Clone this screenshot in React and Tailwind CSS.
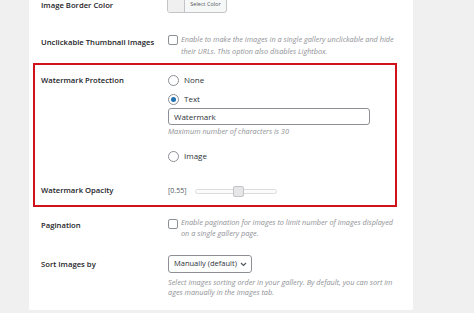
import React from 'react';

const Radio = ({ checked, label }) => (
  <label className="flex items-center h-[14px] gap-[5px] text-[8px] text-[#2c3338]">
    <span className="w-[11px] h-[11px] rounded-full border border-[#8c8f94] bg-white flex items-center justify-center">
      {checked && <span className="w-[5px] h-[5px] rounded-full bg-[#2271b1]" />}
    </span>
    {label}
  </label>
);

const Checkbox = () => (
  <span className="mt-[2px] shrink-0 w-[10px] h-[10px] rounded-[2px] border border-[#8c8f94] bg-white" />
);

const App = () => {
  return (
    <div className="min-h-screen bg-[#f0f0f1] font-['Open_Sans',sans-serif]">
      <div className="ml-[29px] w-[384px] h-[310px] bg-white overflow-hidden pl-[4px] pr-[16px]">
        {/* Image Border Color */}
        <div className="-mt-[5px] grid grid-cols-[127px_1fr] pl-[8px] h-[18px] items-center">
          <div className="text-[7.7px] leading-[10px] pt-[1px] font-semibold text-[#1d2327]">Image Border Color</div>
          <div className="-ml-[1px] flex w-[60px] h-[18px] border border-[#c3c4c7] rounded-[3px] bg-[#f6f7f7] overflow-hidden">
            <span className="w-[17px] h-full bg-[#f0f0f1] border-r border-[#c3c4c7]" />
            <span className="flex-1 flex items-center justify-center text-[5.5px] text-[#50575e]">Select Color</span>
          </div>
        </div>

        {/* Unclickable Thumbnail Images */}
        <div className="mt-[20px] grid grid-cols-[127px_1fr] pl-[8px] -mr-[8px]">
          <div className="text-[7.7px] leading-[18px] font-semibold text-[#1d2327]">Unclickable Thumbnail Images</div>
          <div className="flex gap-[3px]">
            <Checkbox />
            <p className="text-[7.3px] leading-[12px] italic text-[#8f9296]">
              Enable to make the images in a single gallery unclickable and hide their URLs. This option also disables Lightbox.
            </p>
          </div>
        </div>

        {/* Watermark section */}
        <div className="mt-[6px] border-2 border-[#d0131a] pt-[8px] pb-[7px] px-[6px]">
          <div className="grid grid-cols-[127px_1fr]">
            <div className="text-[7.7px] leading-[14px] font-semibold text-[#1d2327]">Watermark Protection</div>
            <div className="flex flex-col">
              <Radio label="None" />
              <div className="mt-[5px]">
                <Radio checked label="Text" />
              </div>
              <div className="mt-[2px] w-[202px] h-[17px] border border-[#8c8f94] rounded-[3px] flex items-center px-[5px] text-[8px] text-[#2c3338]">
                Watermark
              </div>
              <p className="text-[7.3px] leading-[12px] italic text-[#8f9296]">Maximum number of characters is 30</p>
              <div className="mt-[12px]">
                <Radio label="Image" />
              </div>
            </div>
          </div>
          <div className="mt-[21px] grid grid-cols-[127px_1fr] h-[14px] items-center">
            <div className="text-[7.7px] font-semibold text-[#1d2327]">Watermark Opacity</div>
            <div className="flex items-center">
              <span className="text-[7px] text-[#50575e] w-[27px]">[0.55]</span>
              <div className="relative w-[82px] h-[5px] rounded-full border border-[#dcdcde] bg-[#fbfbfb]">
                <span className="absolute left-[37px] -top-[4px] w-[11px] h-[11px] rounded-[2px] border border-[#c3c4c7] bg-[#e6e6e6]" />
              </div>
            </div>
          </div>
        </div>

        {/* Pagination */}
        <div className="mt-[10px] grid grid-cols-[127px_1fr] pl-[8px] -mr-[6px]">
          <div className="text-[7.7px] leading-[16px] font-semibold text-[#1d2327]">Pagination</div>
          <div className="flex gap-[3px]">
            <Checkbox />
            <p className="text-[7.3px] leading-[11px] italic text-[#8f9296]">
              Enable pagination for images to limit number of images displayed on a single gallery page.
            </p>
          </div>
        </div>

        {/* Sort Images by */}
        <div className="mt-[16px] grid grid-cols-[127px_1fr] pl-[8px] -mr-[8px]">
          <div className="text-[7.7px] leading-[18px] font-semibold text-[#1d2327]">Sort Images by</div>
          <div>
            <div className="w-[84px] h-[18px] border border-[#8c8f94] rounded-[3px] flex items-center justify-between pl-[5px] pr-[4px] text-[7.5px] text-[#2c3338] whitespace-nowrap">
              Manually (default)
              <svg width="7" height="5" viewBox="0 0 7 5" fill="none" stroke="#50575e" strokeWidth="1.2">
                <path d="M1 1l2.5 2.5L6 1" />
              </svg>
            </div>
            <p className="mt-[4px] text-[7.3px] leading-[10px] italic text-[#8f9296]">
              Select images sorting order in your gallery. By default, you can sort im ages manually in the images tab.
            </p>
          </div>
        </div>
      </div>
    </div>
  );
};

export default App;
